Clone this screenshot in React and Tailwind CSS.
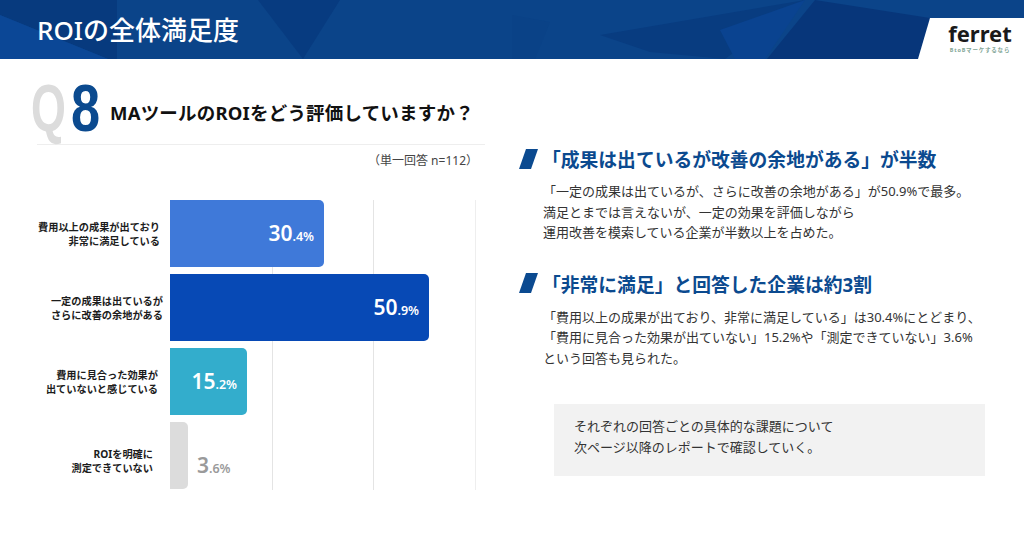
const jp = "font-['Noto_Sans','Noto_Sans_CJK_JP',sans-serif]";

const bars = [
  { label: ['費用以上の成果が出ており', '非常に満足している'], whole: '30', frac: '.4%', width: 'w-[154px]', color: 'bg-[#3f79d9]', labelPad: 'pr-[10px]' },
  { label: ['一定の成果は出ているが', 'さらに改善の余地がある'], whole: '50', frac: '.9%', width: 'w-[259px]', color: 'bg-[#0749b5]', labelPad: 'pr-[7px]' },
  { label: ['費用に見合った効果が', '出ていないと感じている'], whole: '15', frac: '.2%', width: 'w-[77px]', color: 'bg-[#33adcc]', labelPad: 'pr-[12px]' },
  { label: ['ROIを明確に', '測定できていない'], whole: '3', frac: '.6%', width: 'w-[18px]', color: 'bg-[#dcdcdc]', labelPad: 'pr-[17px]', outside: true },
];

function HeaderArt() {
  return (
    <svg className="absolute inset-0" width="1024" height="59" viewBox="0 0 1024 59">
      <rect width="1024" height="59" fill="#0b4489" />
      <polygon points="0,0 117,0 117,59 108,59 0,15" fill="#073a7e" />
      <polygon points="0,15 108,59 0,59" fill="#0b4796" />
      <polygon points="258,0 340,0 303,59" fill="#073b80" />
      <polygon points="512,15 550,22 535,59 512,59" fill="#0a4287" />
      <polygon points="600,35 805,0 725,59 650,52" fill="#083c80" />
      <polygon points="720,30 805,0 765,59 735,59" fill="#0a4390" />
      <polygon points="815,0 930,18 918,59 767,59" fill="#07367a" />
      <polygon points="930,18 1024,18 1024,59 918,59" fill="#ffffff" />
    </svg>
  );
}

function Heading({ children }) {
  return (
    <div className="flex items-center">
      <svg className="mr-[4px] mb-[3px] shrink-0" width="19" height="20" viewBox="0 0 19 20">
        <polygon points="7,0 19,0 12,20 0,20" fill="#0b4a90" />
      </svg>
      <h2 className="text-[18.8px] leading-[24px] font-bold text-[#0b4a8f]">{children}</h2>
    </div>
  );
}

function Value({ bar }) {
  return (
    <>
      <span className="text-[21px]">{bar.whole}</span>
      <span className="text-[12.5px]">{bar.frac}</span>
    </>
  );
}

function BarRow({ bar }) {
  return (
    <div className="flex h-[67px] items-center">
      <div className={`w-[170px] shrink-0 text-right text-[10.2px] leading-[14px] font-bold text-[#1c1c1c] ${bar.labelPad} ${bar.outside ? 'mt-[10px]' : ''}`}>
        {bar.label.map((line) => <div key={line}>{line}</div>)}
      </div>
      <div className={`flex h-full items-center justify-end rounded-r-[5px] ${bar.width} ${bar.color}`}>
        {!bar.outside && (
          <span className="pr-[10px] font-['Noto_Sans',sans-serif] font-semibold text-white">
            <Value bar={bar} />
          </span>
        )}
      </div>
      {bar.outside && (
        <span className="mt-[20px] ml-[9px] font-['Noto_Sans',sans-serif] font-semibold text-[#9a9a9a]">
          <Value bar={bar} />
        </span>
      )}
    </div>
  );
}

export default function App() {
  return (
    <div className={`h-[554px] w-[1024px] overflow-hidden bg-white ${jp}`}>
      <header className="relative h-[59px]">
        <HeaderArt />
        <h1 className="absolute top-[10px] left-[37px] text-[26px] leading-[40px] font-medium text-white">ROIの全体満足度</h1>
        <div className="absolute top-[23px] right-[13px] flex w-[62px] flex-col items-center">
          <span className="font-['Noto_Sans',sans-serif] text-[22px] leading-[21px] font-bold text-[#1a1a1a]">ferret</span>
          <span className="mt-[2px] text-[5.5px] leading-[8px] font-bold tracking-[0.8px] whitespace-nowrap text-[#7fa596]">BtoBマーケするなら</span>
        </div>
      </header>

      <main className="flex">
        <section className="w-[512px] shrink-0">
          <div className="ml-[37px] flex h-[86px] w-[448px] items-start border-b border-[#eeeeee] pt-[20px]">
            <div className="-ml-[6px] flex h-[58px] w-[73px] shrink-0 items-center font-['Liberation_Sans',sans-serif] text-[67px] leading-[58px] font-bold">
              <span className="inline-block w-[40px] origin-left scale-x-[0.67] text-[#dcdcdc]">Q</span>
              <span className="inline-block w-[30px] origin-left scale-x-[0.78] text-[#0b4a8f]">8</span>
            </div>
            <p className="mt-[21px] ml-[6px] text-[18.5px] leading-[26px] font-bold tracking-[0.2px] whitespace-nowrap text-[#111111]">MAツールのROIをどう評価していますか？</p>
          </div>
          <p className="mt-[7px] pr-[34px] text-right text-[12px] leading-[17px] text-[#444444]">（単一回答 n=112）</p>

          <div className="relative mt-[31px] h-[290px] w-[500px]">
            <div className="absolute top-0 left-[272px] h-[290px] w-px bg-[#e4e4e4]" />
            <div className="absolute top-0 left-[373px] h-[290px] w-px bg-[#e4e4e4]" />
            <div className="absolute top-0 left-[475px] h-[290px] w-px bg-[#eeeeee]" />
            <div className="relative flex flex-col gap-[7px]">
              {bars.map((bar) => <BarRow key={bar.whole} bar={bar} />)}
            </div>
          </div>
        </section>

        <section className="flex-1 pt-[89px] pl-[7px]">
          <Heading>「成果は出ているが改善の余地がある」が半数</Heading>
          <div className="mt-[9px] ml-[24px] text-[13px] leading-[20.5px] text-[#333333]">
            <p>「一定の成果は出ているが、さらに改善の余地がある」が50.9%で最多。</p>
            <p>満足とまでは言えないが、一定の効果を評価しながら</p>
            <p>運用改善を模索している企業が半数以上を占めた。</p>
          </div>

          <div className="mt-[30px]">
            <Heading>「非常に満足」と回答した企業は約3割</Heading>
          </div>
          <div className="mt-[10px] ml-[24px] text-[13px] leading-[20.5px] text-[#333333]">
            <p>「費用以上の成果が出ており、非常に満足している」は30.4%にとどまり、</p>
            <p>「費用に見合った効果が出ていない」15.2%や「測定できていない」3.6%</p>
            <p>という回答も見られた。</p>
          </div>

          <div className="mt-[36px] ml-[35px] flex h-[72px] w-[431px] flex-col justify-center bg-[#f2f2f2] pb-[6px] pl-[20px] text-[13px] leading-[21px] text-[#333333]">
            <p>それぞれの回答ごとの具体的な課題について</p>
            <p>次ページ以降のレポートで確認していく。</p>
          </div>
        </section>
      </main>
    </div>
  );
}
